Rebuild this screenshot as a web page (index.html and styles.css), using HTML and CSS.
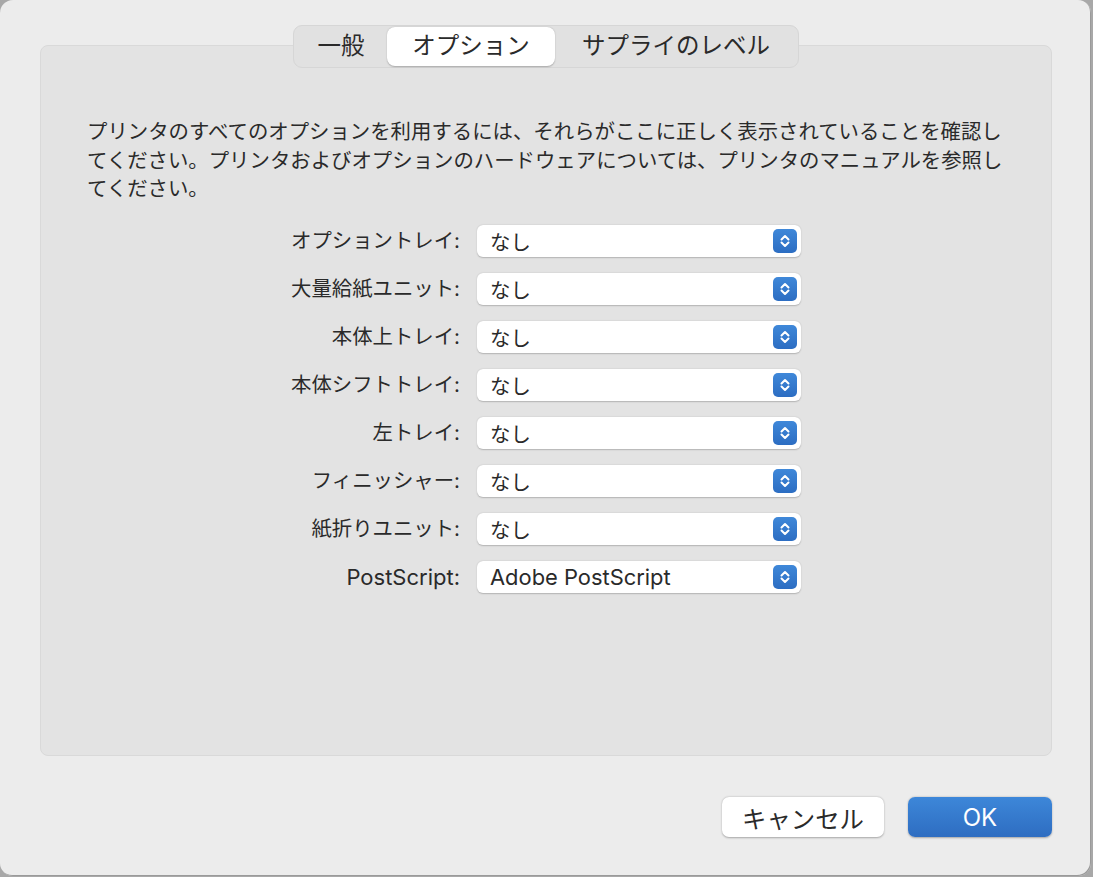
FILE: index.html
```html
<!DOCTYPE html>
<html lang="ja">
<head>
  <meta charset="UTF-8">
  <title>プリンタオプション</title>
  <link rel="stylesheet" href="styles.css">
</head>
<body>

  <div class="window">

    <!-- Tabs -->
    <div class="tabs">
      <div class="tab tab-general">一般</div>
      <div class="tab tab-options active">オプション</div>
      <div class="tab tab-supply">サプライのレベル</div>
    </div>

    <!-- Options panel -->
    <div class="panel">
      <p class="intro">プリンタのすべてのオプションを利用するには、それらがここに正しく表示されていることを確認し<br>てください。プリンタおよびオプションのハードウェアについては、プリンタのマニュアルを参照し<br>てください。</p>

      <div class="form">
        <label class="label">オプショントレイ:</label>
        <div class="select"><span>なし</span><span class="stepper"><svg viewBox="0 0 24 24"><path d="M8.5 10.5 L12 7 L15.5 10.5 M8.5 13.5 L12 17 L15.5 13.5"/></svg></span></div>

        <label class="label">大量給紙ユニット:</label>
        <div class="select"><span>なし</span><span class="stepper"><svg viewBox="0 0 24 24"><path d="M8.5 10.5 L12 7 L15.5 10.5 M8.5 13.5 L12 17 L15.5 13.5"/></svg></span></div>

        <label class="label">本体上トレイ:</label>
        <div class="select"><span>なし</span><span class="stepper"><svg viewBox="0 0 24 24"><path d="M8.5 10.5 L12 7 L15.5 10.5 M8.5 13.5 L12 17 L15.5 13.5"/></svg></span></div>

        <label class="label">本体シフトトレイ:</label>
        <div class="select"><span>なし</span><span class="stepper"><svg viewBox="0 0 24 24"><path d="M8.5 10.5 L12 7 L15.5 10.5 M8.5 13.5 L12 17 L15.5 13.5"/></svg></span></div>

        <label class="label">左トレイ:</label>
        <div class="select"><span>なし</span><span class="stepper"><svg viewBox="0 0 24 24"><path d="M8.5 10.5 L12 7 L15.5 10.5 M8.5 13.5 L12 17 L15.5 13.5"/></svg></span></div>

        <label class="label">フィニッシャー:</label>
        <div class="select"><span>なし</span><span class="stepper"><svg viewBox="0 0 24 24"><path d="M8.5 10.5 L12 7 L15.5 10.5 M8.5 13.5 L12 17 L15.5 13.5"/></svg></span></div>

        <label class="label">紙折りユニット:</label>
        <div class="select"><span>なし</span><span class="stepper"><svg viewBox="0 0 24 24"><path d="M8.5 10.5 L12 7 L15.5 10.5 M8.5 13.5 L12 17 L15.5 13.5"/></svg></span></div>

        <label class="label"><span class="latin">PostScript:</span></label>
        <div class="select"><span class="latin">Adobe PostScript</span><span class="stepper"><svg viewBox="0 0 24 24"><path d="M8.5 10.5 L12 7 L15.5 10.5 M8.5 13.5 L12 17 L15.5 13.5"/></svg></span></div>
      </div>
    </div>

    <!-- Buttons -->
    <div class="buttons">
      <button class="btn">キャンセル</button>
      <button class="btn primary"><span class="latin">OK</span></button>
    </div>

  </div>

</body>
</html>
```

FILE: styles.css
```css
body {
  margin: 0;
  background-color: #a8a8a8;
  font-family: Inter, "Noto Sans CJK JP", sans-serif;
  color: #2a2a2a;
}

.window {
  width: 1091px;
  height: 876px;
  box-sizing: border-box;
  background-color: #ececec;
  border-radius: 13px;
  box-shadow: inset -1px -1px 0 #9a9a9a;
  padding: 25px 39px 0 40px;
}

.latin {
  font-family: Inter, "Liberation Sans", sans-serif;
}

/* Tabs */

.tabs {
  position: relative;
  z-index: 1;
  display: flex;
  width: max-content;
  margin: 0 auto -23px;
  padding: 1px;
  background-color: #e1e1e1;
  border: 1px solid #d6d6d6;
  border-radius: 9px;
}

.tab {
  height: 39px;
  line-height: 38px;
  text-align: center;
  font-size: 23.5px;
  border-radius: 8px;
}

.tab-general {
  width: 92px;
}

.tab-options {
  width: 168px;
}

.tab-supply {
  width: 242px;
}

.tab.active {
  background-color: white;
  box-shadow: 0 0.5px 1.5px rgba(0,0,0,0.25);
}

/* Panel */

.panel {
  height: 711px;
  box-sizing: border-box;
  background-color: #e3e3e3;
  border: 1px solid #d9d9d9;
  border-radius: 8px;
  padding: 72px 40px 0 46px;
}

.intro {
  margin: 0;
  font-size: 20.4px;
  line-height: 28.5px;
  white-space: nowrap;
}

.form {
  display: grid;
  grid-template-columns: 373px 324px;
  grid-auto-rows: 32px;
  column-gap: 17px;
  row-gap: 16px;
  margin-top: 21px;
}

.label {
  text-align: right;
  font-size: 20.4px;
  line-height: 32px;
}

.label .latin {
  font-size: 22px;
}

.select {
  display: flex;
  align-items: center;
  justify-content: space-between;
  background-color: white;
  border-radius: 6px;
  box-shadow: 0 0.5px 1.5px rgba(0,0,0,0.22);
  padding: 0 4px 0 13px;
  font-size: 20.4px;
}

.select .latin {
  font-size: 21.9px;
}

.stepper {
  display: flex;
  width: 24px;
  height: 24px;
  border-radius: 5px;
  background: linear-gradient(#3f88d9, #2c6dc2);
}

.stepper svg {
  width: 24px;
  height: 24px;
  fill: none;
  stroke: white;
  stroke-width: 2;
  stroke-linecap: round;
  stroke-linejoin: round;
}

/* Buttons */

.buttons {
  display: flex;
  justify-content: flex-end;
  gap: 24px;
  margin-top: 41px;
}

.btn {
  height: 40px;
  border: none;
  border-radius: 7px;
  background-color: white;
  color: #2a2a2a;
  font-family: Inter, "Noto Sans CJK JP", sans-serif;
  font-size: 24.4px;
  width: 162px;
  box-shadow: 0 0.5px 2px rgba(0,0,0,0.3);
}

.btn.primary {
  width: 144px;
  color: white;
  background: linear-gradient(#3d87d9, #2e6dc1);
}

.btn.primary .latin {
  font-size: 24px;
}
```
